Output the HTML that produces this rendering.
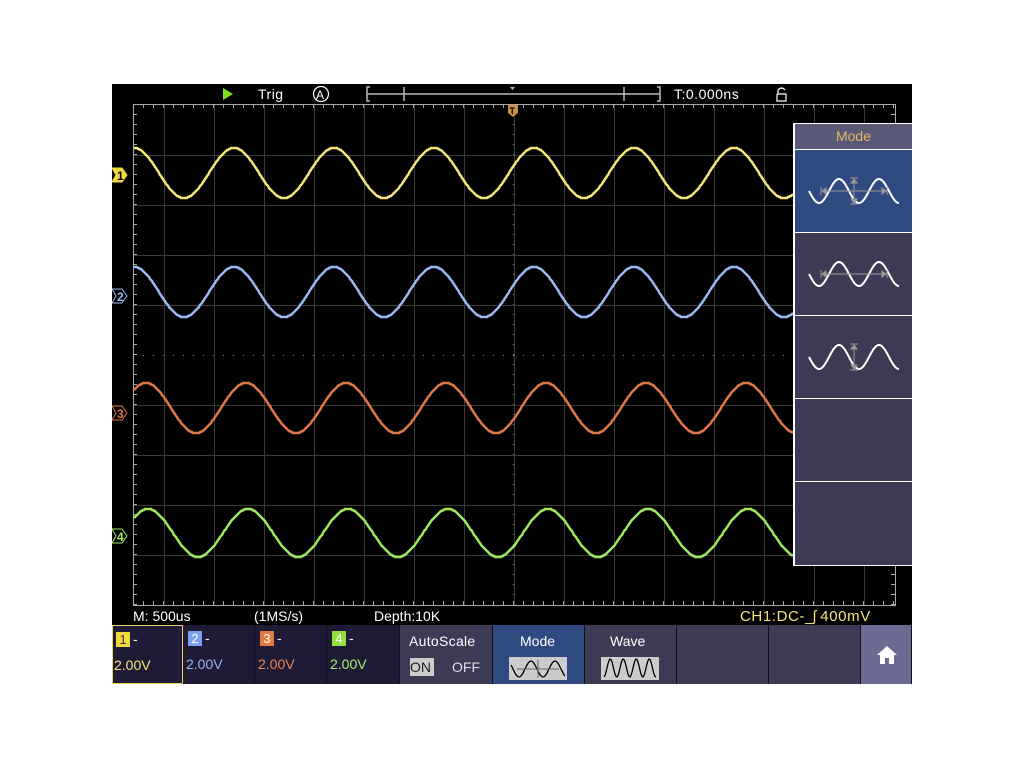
<!DOCTYPE html>
<html><head><meta charset="utf-8"><style>
body{margin:0;background:#fff;width:1024px;height:768px;position:relative;font-family:"Liberation Sans",sans-serif;overflow:hidden}
#scr{position:absolute;left:112px;top:84px;width:800px;height:600px;background:#000}
.t{position:absolute;color:#fff;font-size:14px;white-space:nowrap}
.cell{position:absolute;top:541px;height:59px;box-sizing:border-box;border-right:1px solid #111}
.chn{background:#1f1b36}
.bx{display:inline-block;width:14px;height:15px;line-height:15px;text-align:center;font-size:13px;color:#fff;margin-right:3px}
</style></head><body>
<div id="scr">
<svg width="800" height="600" style="position:absolute;left:0;top:0" id="sv"></svg>
<div class="t" style="left:146px;top:2px;font-size:14px;letter-spacing:0.5px">Trig</div>
<div class="t" style="left:562px;top:2px;font-size:14px;letter-spacing:0.5px">T:0.000ns</div>
<div class="t" style="left:21px;top:524px;font-size:14px">M: 500us</div>
<div class="t" style="left:142px;top:524px;font-size:14px">(1MS/s)</div>
<div class="t" style="left:262px;top:524px;font-size:14px">Depth:10K</div>
<div class="t" style="left:628px;top:524px;font-size:15px;color:#f3e57a;letter-spacing:0.6px">CH1:DC-<span style="letter-spacing:-1px">_∫</span> 400mV</div>
<!-- mode panel -->
<div style="position:absolute;left:681px;top:39px;width:119px;height:443px;background:#fff"></div>
<div style="position:absolute;left:683px;top:40px;width:117px;height:25px;background:#5a5a78;color:#e8b46a;font-size:14px;text-align:center;line-height:24px">Mode</div>
<div style="position:absolute;left:683px;top:66px;width:117px;height:82px;background:#2e4a80"></div>
<div style="position:absolute;left:683px;top:149px;width:117px;height:82px;background:#3d3a55"></div>
<div style="position:absolute;left:683px;top:232px;width:117px;height:82px;background:#3d3a55"></div>
<div style="position:absolute;left:683px;top:315px;width:117px;height:82px;background:#3d3a55"></div>
<div style="position:absolute;left:683px;top:398px;width:117px;height:83px;background:#3d3a55"></div>
<svg width="800" height="600" style="position:absolute;left:0;top:0" id="sv2"></svg>
<!-- bottom -->
<div class="cell chn" style="left:0;width:71px;border:1px solid #e8d060">
 <div style="position:absolute;left:3px;top:5px;color:#fff;font-size:14px"><span class="bx" style="background:#f0d840;color:#333">1</span>-</div>
 <div style="position:absolute;left:1px;top:31px;color:#f3e57a;font-size:14px">2.00V</div></div>
<div class="cell chn" style="left:71px;width:72px">
 <div style="position:absolute;left:5px;top:5px;color:#fff;font-size:14px"><span class="bx" style="background:#7aa0f0">2</span>-</div>
 <div style="position:absolute;left:3px;top:31px;color:#9ab4f0;font-size:14px">2.00V</div></div>
<div class="cell chn" style="left:143px;width:72px">
 <div style="position:absolute;left:5px;top:5px;color:#fff;font-size:14px"><span class="bx" style="background:#e07a40">3</span>-</div>
 <div style="position:absolute;left:3px;top:31px;color:#e8875a;font-size:14px">2.00V</div></div>
<div class="cell chn" style="left:215px;width:73px">
 <div style="position:absolute;left:5px;top:5px;color:#fff;font-size:14px"><span class="bx" style="background:#90e040">4</span>-</div>
 <div style="position:absolute;left:3px;top:31px;color:#a8ee70;font-size:14px">2.00V</div></div>
<div class="cell" style="left:288px;width:93px;background:#3d3a55">
 <div style="position:absolute;left:9px;top:8px;color:#fff;font-size:14px;letter-spacing:0.3px">AutoScale</div>
 <div style="position:absolute;left:10px;top:33px;width:24px;height:18px;background:#ccc;color:#222;font-size:14px;line-height:18px">ON</div>
 <div style="position:absolute;left:52px;top:33px;color:#ddd;font-size:14px;line-height:18px">OFF</div></div>
<div class="cell" style="left:381px;width:92px;background:#2e4a80">
 <div style="position:absolute;left:27px;top:8px;color:#fff;font-size:14px">Mode</div>
 <div style="position:absolute;left:16px;top:32px;width:58px;height:23px;background:#ccc"></div></div>
<div class="cell" style="left:473px;width:92px;background:#3d3a55">
 <div style="position:absolute;left:25px;top:8px;color:#fff;font-size:14px">Wave</div>
 <div style="position:absolute;left:16px;top:32px;width:58px;height:23px;background:#ccc"></div></div>
<div class="cell" style="left:565px;width:92px;background:#3d3a55"></div>
<div class="cell" style="left:657px;width:92px;background:#3d3a55"></div>
<div class="cell" style="left:749px;width:51px;background:#6a6a92"></div>
<svg width="800" height="600" style="position:absolute;left:0;top:0" id="sv3"></svg>
</div>
<script>
const NS="http://www.w3.org/2000/svg";
function add(svg,tag,at){const e=document.createElementNS(NS,tag);for(const k in at)e.setAttribute(k,at[k]);svg.appendChild(e);return e;}
const sv=document.getElementById('sv'),sv2=document.getElementById('sv2'),sv3=document.getElementById('sv3');
const L=21,R=783,T=20,B=521;
for(let k=0;k<15;k++){const x=52+50*k;add(sv,'line',{x1:x+.5,y1:T,x2:x+.5,y2:B,stroke:'#3a3a3a','stroke-width':1});}
for(let k=1;k<10;k++){const y=21+50*k;if(k==5)continue;add(sv,'line',{x1:L,y1:y+.5,x2:R,y2:y+.5,stroke:'#3a3a3a','stroke-width':1});}
for(let x=L;x<R;x+=10)add(sv,'rect',{x:x,y:271,width:1,height:1,fill:'#888'});
for(let y=T;y<B;y+=10)add(sv,'rect',{x:401,y:y,width:1,height:1,fill:'#888'});
add(sv,'rect',{x:L+.5,y:T+.5,width:R-L,height:B-T,fill:'none',stroke:'#aaa','stroke-width':1});
for(let x=L;x<R;x+=10){add(sv,'line',{x1:x+.5,y1:T,x2:x+.5,y2:T+4,stroke:'#aaa'});add(sv,'line',{x1:x+.5,y1:B-4,x2:x+.5,y2:B,stroke:'#aaa'});}
for(let y=T;y<B;y+=10){add(sv,'line',{x1:L,y1:y+.5,x2:L+4,y2:y+.5,stroke:'#aaa'});add(sv,'line',{x1:R-4,y1:y+.5,x2:R,y2:y+.5,stroke:'#aaa'});}
function wave(cy,amp,px,col){let d='';for(let x=L+1;x<=681;x++){const y=cy-amp*Math.cos(2*Math.PI*(x-px)/100);d+=(d?'L':'M')+x+' '+Math.round(y);}add(sv,'path',{d:d,fill:'none',stroke:col,'stroke-width':2.5});}
wave(89,25,22,'#f3e57a');wave(208,25,22,'#9cb8f0');wave(324,25,34,'#e0784a');wave(449,24,36,'#a0e860');
function mk(y,n,col,fill){const g=add(sv,'g',{});add(g,'path',{d:`M0 ${y-7}H10L15 ${y}L10 ${y+7}H0L4 ${y}Z`,fill:fill?col:'none',stroke:col,'stroke-width':1});const t=add(g,'text',{x:5,y:y+5,fill:fill?'#000':col,'font-size':12,'font-weight':'bold','font-family':'Liberation Sans'});t.textContent=n;}
mk(91,'1','#f0d840',true);mk(212,'2','#9cb8f0',false);mk(329,'3','#e0784a',false);mk(452,'4','#a0e860',false);
add(sv,'path',{d:'M111 4L121 10L111 16Z',fill:'#7ee020'});
add(sv,'circle',{cx:209,cy:10,r:7.5,fill:'none',stroke:'#fff','stroke-width':1.2});
const ta=add(sv,'text',{x:204,y:15,fill:'#fff','font-size':12,'font-family':'Liberation Sans'});ta.textContent='A';
add(sv,'path',{d:'M258 3H255V17H258M255 10H548M292 3V17M512 3V17M545 3H548V17H545',fill:'none',stroke:'#bbb','stroke-width':1.5});
add(sv,'path',{d:'M398 3L403 3L400.5 6Z',fill:'#bbb'});
add(sv,'path',{d:'M665 10V17H674V10H665M666 10V6Q669.5 2 673 6',fill:'none',stroke:'#fff','stroke-width':1.2});
add(sv,'path',{d:'M396 21H406V29L401 33L396 29Z',fill:'#c89040'});
const tt=add(sv,'text',{x:397.5,y:30,fill:'#000','font-size':9,'font-weight':'bold','font-family':'Liberation Sans'});tt.textContent='T';
function sineIcon(svg,x0,cy,w,col,sw){let d='';for(let i=0;i<=w;i++){const y=cy+12*Math.sin(2*Math.PI*i/40);d+=(d?'L':'M')+(x0+i)+' '+y.toFixed(1);}add(svg,'path',{d:d,fill:'none',stroke:col,'stroke-width':sw});}
function arrows(svg,x0,cy,h,v,col){if(h){add(svg,'path',{d:`M${x0+12} ${cy}H${x0+78}M${x0+12} ${cy-4}V${cy+4}M${x0+78} ${cy-4}V${cy+4}M${x0+13} ${cy}l4 -3v6zM${x0+77} ${cy}l-4 -3v6z`,stroke:col,fill:col,'stroke-width':1});}
 if(v){const xm=x0+45;add(svg,'path',{d:`M${xm} ${cy-13}V${cy+13}M${xm-4} ${cy-13}H${xm+4}M${xm-4} ${cy+13}H${xm+4}M${xm} ${cy-12}l-3 4h6zM${xm} ${cy+12}l-3 -4h6z`,stroke:col,fill:col,'stroke-width':1});}}
sineIcon(sv2,697,107,90,'#fff',2);arrows(sv2,697,107,1,1,'#999');
sineIcon(sv2,697,190,90,'#fff',2);arrows(sv2,697,190,1,0,'#999');
sineIcon(sv2,697,273,90,'#fff',2);arrows(sv2,697,273,0,1,'#999');
(function(){let d='';for(let i=0;i<=54;i++){const y=585+8*Math.sin(2*Math.PI*(i-2)/24);d+=(d?'L':'M')+(399+i)+' '+y.toFixed(1);}add(sv3,'path',{d:d,fill:'none',stroke:'#000','stroke-width':1.3});
add(sv3,'path',{d:'M405 585H447M426 576V594',stroke:'#666','stroke-width':1,fill:'none'});
d='';for(let i=0;i<=52;i++){const y=584-9*Math.sin(2*Math.PI*(i-3)/13);d+=(d?'L':'M')+(492+i)+' '+y.toFixed(1);}add(sv3,'path',{d:d,fill:'none',stroke:'#000','stroke-width':1.3});
add(sv3,'path',{d:'M775 562L765 571H768V580H773V574H777V580H782V571H785Z',fill:'#fff'});})();
</script>
</body></html>
